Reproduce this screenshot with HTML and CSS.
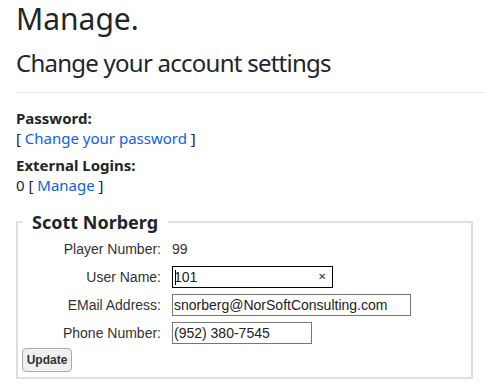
FILE: index.html
```html
<!DOCTYPE html>
<html lang="en">
<head>
  <meta charset="UTF-8" />
  <meta name="viewport" content="width=device-width, initial-scale=1.0"/>
  <title>Manage</title>
  <link rel="stylesheet" href="styles.css">
</head>
<body>
  <div class="page">
    <h2 class="title">Manage.</h2>
    <h3 class="subtitle">Change your account settings</h3>
    <hr class="rule">

    <dl class="account">
      <dt>Password:</dt>
      <dd>[ <a href="#">Change your password</a> ]</dd>
      <dt>External Logins:</dt>
      <dd>0 [ <a href="#">Manage</a> ]</dd>
    </dl>

    <fieldset class="profile">
      <legend>Scott Norberg</legend>
      <div class="fields">
        <label>Player Number:</label>
        <span class="value">99</span>

        <label for="userName">User Name:</label>
        <div class="user-box">
          <input id="userName" class="field field-user" type="text" value="101">
          <span class="caret"></span>
          <span class="clear">&#x2715;</span>
        </div>

        <label for="email">EMail Address:</label>
        <input id="email" class="field field-email" type="text" value="snorberg@NorSoftConsulting.com">

        <label for="phone">Phone Number:</label>
        <input id="phone" class="field field-phone" type="text" value="(952) 380-7545">
      </div>
      <button class="btn-update" type="button">Update</button>
    </fieldset>
  </div>
</body>
</html>
```

FILE: styles.css
```css
body {
  margin: 0;
  background-color: #fff;
  font-family: 'Noto Sans', 'Open Sans', sans-serif;
  color: #212529;
}

.page {
  padding-left: 16px;
}

.title {
  margin: 0;
  font-size: 30px;
  font-weight: 400;
  line-height: 37px;
}

.subtitle {
  margin: 12px 0 0;
  font-size: 24px;
  font-weight: 400;
  line-height: 27px;
  letter-spacing: -0.75px;
}

.rule {
  margin: 16px 0 0;
  border: 0;
  border-top: 1px solid #e5e5e5;
}

.account {
  margin: 15px 0 0;
  font-size: 15px;
  line-height: 20px;
}

.account dt {
  font-weight: 700;
}

.account dd {
  margin: 0 0 7px;
}

.account a {
  color: #0d5fe0;
  text-decoration: none;
}

.profile {
  box-sizing: border-box;
  width: 457px;
  margin: 15px 0 0;
  padding: 4px 4px 5px;
  border: 2px solid #dedede;
  font-family: 'Liberation Sans', Arial, sans-serif;
}

.profile legend {
  padding: 0 10px;
  font-family: 'Noto Sans', 'Open Sans', sans-serif;
  font-size: 18px;
  font-weight: 700;
  line-height: 24px;
  color: #212529;
}

.fields {
  display: grid;
  grid-template-columns: 139px auto;
  column-gap: 11px;
  row-gap: 6px;
  align-items: center;
  font-size: 14px;
  color: #333;
}

.fields label {
  text-align: right;
  line-height: 22px;
}

.value {
  line-height: 22px;
}

.field {
  box-sizing: border-box;
  height: 22px;
  margin: 0;
  padding: 1px 1px;
  border: 1px solid #767676;
  border-radius: 0;
  font-family: 'Liberation Sans', Arial, sans-serif;
  font-size: 14px;
  color: #222;
  outline: none;
}

.user-box {
  position: relative;
  width: 161px;
}

.field-user {
  width: 161px;
  border-color: #000;
  padding-right: 20px;
}

.caret {
  position: absolute;
  left: 3px;
  top: 4px;
  width: 1px;
  height: 15px;
  background-color: #000;
}

.clear {
  position: absolute;
  right: 7px;
  top: 3px;
  font-size: 10px;
  line-height: 16px;
  color: #333;
}

.field-email {
  width: 239px;
}

.field-phone {
  width: 140px;
}

.btn-update {
  display: block;
  box-sizing: border-box;
  width: 50px;
  height: 24px;
  margin-top: 4px;
  padding: 0;
  background-color: #efefef;
  border: 1px solid #aaa;
  border-radius: 4px;
  font-family: 'Liberation Sans', Arial, sans-serif;
  font-size: 12px;
  font-weight: 700;
  color: #333;
}
```
